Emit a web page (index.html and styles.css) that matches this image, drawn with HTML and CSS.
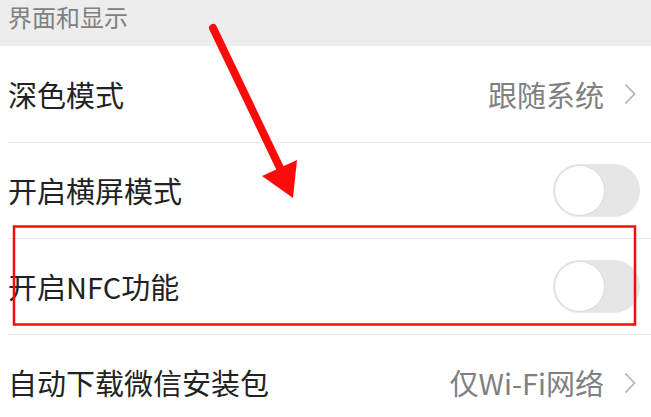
FILE: index.html
```html
<!DOCTYPE html>
<html lang="zh-CN">
<head>
<meta charset="utf-8">
<title>界面和显示</title>
<link rel="stylesheet" href="styles.css">
</head>
<body>
<div class="page">
  <div class="section-header">界面和显示</div>
  <div class="list">
    <div class="row">
      <span class="label">深色模式</span>
      <span class="value">跟随系统<svg class="chev" width="12" height="22" viewBox="0 0 12 22"><polyline points="1.5,1.5 10.5,11 1.5,20.5" fill="none" stroke="#b5b5b5" stroke-width="1.8"/></svg></span>
    </div>
    <div class="row">
      <span class="label">开启横屏模式</span>
      <span class="toggle"><span class="knob"></span></span>
    </div>
    <div class="row">
      <span class="label">开启NFC功能</span>
      <span class="toggle"><span class="knob"></span></span>
    </div>
    <div class="row">
      <span class="label">自动下载微信安装包</span>
      <span class="value">仅Wi-Fi网络<svg class="chev" width="12" height="22" viewBox="0 0 12 22"><polyline points="1.5,1.5 10.5,11 1.5,20.5" fill="none" stroke="#b5b5b5" stroke-width="1.8"/></svg></span>
    </div>
  </div>
  <svg class="annot" width="651" height="417" viewBox="0 0 651 417">
    <rect x="14" y="226.5" width="621" height="98" fill="none" stroke="#f20d0d" stroke-width="2.5"/>
    <line x1="213" y1="28" x2="280" y2="168" stroke="#ff0a0a" stroke-width="8" stroke-linecap="round"/>
    <polygon points="262,176 297,160 293,198" fill="#ff0a0a"/>
  </svg>
</div>
</body>
</html>
```

FILE: styles.css
```css
html, body {
  margin: 0;
  padding: 0;
  background: #ffffff;
}
body {
  font-family: "Noto Sans CJK SC", "Noto Sans", sans-serif;
  font-weight: 400;
}
.page {
  position: relative;
  width: 651px;
  height: 417px;
  overflow: hidden;
}
.section-header {
  height: 46px;
  box-sizing: border-box;
  background: #ededed;
  color: #808080;
  font-size: 24px;
  line-height: 32px;
  padding-left: 8px;
  padding-top: 1px;
}
.list {
  margin-left: 8px;
}
.row {
  height: 96px;
  box-sizing: border-box;
  display: flex;
  align-items: center;
  justify-content: space-between;
  padding-right: 11px;
  border-top: 1px solid #ebebeb;
}
.row:first-child {
  border-top: none;
}
.label {
  font-size: 29px;
  color: #222222;
  line-height: 1;
}
.value {
  display: flex;
  align-items: center;
  gap: 20px;
  font-size: 29px;
  color: #808080;
  line-height: 1;
}
.chev {
  display: block;
  margin-right: 4px;
}
.toggle {
  width: 87px;
  height: 53px;
  box-sizing: border-box;
  border-radius: 27px;
  background: #e6e6e6;
  display: flex;
  align-items: center;
  padding-left: 1px;
}
.knob {
  width: 51px;
  height: 51px;
  box-sizing: border-box;
  border-radius: 50%;
  background: #ffffff;
  border: 1px solid #dcdcdc;
}
.annot {
  position: absolute;
  left: 0;
  top: 0;
}
```
